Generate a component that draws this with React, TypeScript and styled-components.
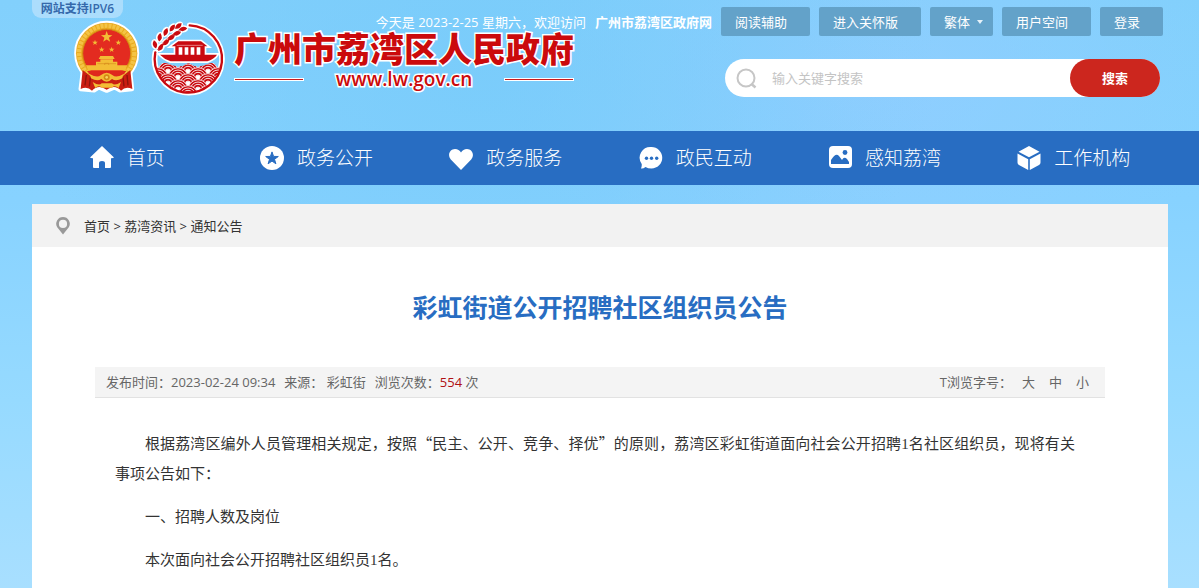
import React from "react";
import styled, { createGlobalStyle } from "styled-components";

const uiFont = `"Open Sans", "Noto Sans CJK SC", sans-serif`;
const cjkFont = `"Noto Sans CJK SC", sans-serif`;

const GlobalStyle = createGlobalStyle`
  *, *::before, *::after { box-sizing: border-box; }
  html { min-height: 100%; }
  body {
    margin: 0;
    min-height: 100vh;
    font: 13px/20px ${uiFont};
    color: #333;
    background:
      radial-gradient(ellipse at 40% 10%, rgba(120, 203, 250, 0.8), transparent 45%),
      radial-gradient(ellipse at 72% 14%, rgba(146, 205, 255, 0.8), transparent 30%),
      linear-gradient(#82d0fc 0, #87d2ff 200px, #96daff 400px, #a8dfff 588px);
  }
  a { color: inherit; text-decoration: none; }
  button, input, select { font: inherit; border: 0; margin: 0; }
`;

const Header = styled.header`
  display: grid;
  min-height: 131px;
  margin: 0 31px 0 32px;
  > * { grid-area: 1 / 1; }
`;

const Brand = styled.div`
  justify-self: start;
`;

const Badge = styled.div`
  width: 91px;
  height: 18px;
  border-radius: 0 0 9px 9px;
  background: rgba(190, 226, 252, 0.7);
  color: #3569ab;
  font-size: 12px;
  font-weight: 600;
  line-height: 18px;
  text-align: center;
`;

const BrandLink = styled.a`
  display: flex;
  gap: 8px;
  padding: 2px 0 0 40px;
`;

const Wordmark = styled.div`
  padding-top: 10px;
  color: #cb0a0c;
  paint-order: stroke fill;
  -webkit-text-stroke: 3px #fff;
`;

const SiteName = styled.div`
  font: 900 34px/36px ${cjkFont};
  white-space: nowrap;
`;

const SiteUrl = styled.div`
  display: flex;
  align-items: center;
  justify-content: space-between;
  font-size: 19px;
  font-weight: 600;
  line-height: 26px;
  &::before, &::after {
    content: "";
    width: 70px;
    height: 3px;
    border: 1px solid #fff;
    background: #cb1a1c;
  }
`;

const Tools = styled.div`
  justify-self: end;
  display: flex;
  flex-direction: column;
  align-items: flex-end;
  gap: 23px;
  padding-top: 7px;
`;

const TopBar = styled.div`
  display: flex;
  align-items: center;
  gap: 9px;
  margin-right: 5px;
  color: #fff;
  white-space: nowrap;
`;

const SiteLink = styled.strong`
  margin-left: 9px;
`;

const TopButton = styled.button`
  height: 29px;
  padding: 0 23px 0 14px;
  border-radius: 2px;
  background: #63a2c9;
  color: #fff;
  cursor: pointer;
`;

const LangBox = styled.label`
  display: flex;
  align-items: center;
  position: relative;
`;

const LangSelect = styled.select`
  appearance: none;
  height: 29px;
  width: 63px;
  padding: 0 23px 0 14px;
  border-radius: 2px;
  background: #63a2c9;
  color: #fff;
`;

const Caret = styled.svg`
  position: absolute;
  right: 10px;
  pointer-events: none;
`;

const SearchForm = styled.form`
  display: flex;
  align-items: center;
  width: 435px;
  height: 38px;
  margin-right: 8px;
  padding-left: 11px;
  border-radius: 19px;
  background: #fff;
`;

const SearchInput = styled.input`
  flex: 1;
  min-width: 0;
  padding: 0 14px;
  outline: 0;
  background: transparent;
  color: #333;
  &::placeholder { color: #c4c4c4; opacity: 1; }
`;

const SearchButton = styled.button`
  width: 90px;
  height: 38px;
  border-radius: 19px;
  background: #cc261e;
  color: #fff;
  font-weight: 700;
  cursor: pointer;
`;

const Nav = styled.nav`
  background: #286dc2;
`;

const NavList = styled.ul`
  display: grid;
  grid-template-columns: repeat(6, 1fr);
  margin: 0 31px 0 32px;
  padding: 0;
  list-style: none;
`;

const NavLink = styled.a`
  display: flex;
  align-items: center;
  justify-content: center;
  gap: 12px;
  height: 54px;
  color: #fff;
  font-size: 19px;
  font-weight: 300;
  white-space: nowrap;
`;

const Panel = styled.main`
  min-height: calc(100vh - 204px);
  margin: 19px 31px 0 32px;
  background: #fff;
`;

const Breadcrumb = styled.nav`
  display: flex;
  align-items: center;
  gap: 14px;
  height: 43px;
  padding-left: 24px;
  background: #f2f2f2;
`;

const Article = styled.article`
  padding: 40px 63px 24px;
`;

const Title = styled.h1`
  margin: 0 0 40px;
  color: #286dc2;
  font-size: 25px;
  font-weight: 700;
  line-height: 40px;
  text-align: center;
`;

const Meta = styled.div`
  display: flex;
  justify-content: space-between;
  height: 31px;
  padding: 0 16px 0 11px;
  border-bottom: 1px solid #e2e2e2;
  background: #f4f4f4;
  color: #666;
  line-height: 30px;
`;

const MetaGroup = styled.div<{ $gap: number }>`
  display: flex;
  align-items: center;
  gap: ${(p) => p.$gap}px;
`;

const Count = styled.span`
  color: #b01015;
`;

const SizeLabel = styled.span`
  margin-right: -4px;
`;

const SizeButton = styled.button`
  padding: 0;
  background: none;
  color: inherit;
  cursor: pointer;
`;

const Body = styled.div`
  padding: 30px 30px 0 20px;
  font: 15px/30px ${cjkFont};
`;

const Paragraph = styled.p`
  margin: 0 0 13px;
  text-indent: 2em;
  text-align: justify;
`;

const Numeral = styled.span`
  font-family: "Liberation Serif", serif;
  line-height: 1;
`;

const GOLD = "#f3bd35";
const RED = "#c90a10";

const starPath = (cx: number, cy: number, r: number) =>
  Array.from({ length: 10 }, (_, i) => {
    const radius = i % 2 ? r * 0.4 : r;
    const a = (Math.PI / 5) * i - Math.PI / 2;
    return `${i ? "L" : "M"}${(cx + radius * Math.cos(a)).toFixed(1)} ${(cy + radius * Math.sin(a)).toFixed(1)}`;
  }).join("") + "Z";

const Emblem = () => (
  <svg width="70" height="75" viewBox="6 15 210 225" aria-hidden="true">
    <g stroke="#fff" strokeWidth="13" strokeLinejoin="round" fill="#fff">
      <circle cx="110" cy="115" r="91" />
      <path d="M40 160L32 222L72 226L86 217L110 227L134 217L150 226L186 222L179 160Z" />
    </g>
    <circle cx="110" cy="115" r="92" fill="#e9a91f" />
    <circle cx="110" cy="115" r="83" fill="none" stroke="#f4c445" strokeWidth="13" strokeDasharray="9 3" />
    <path d="M38 165L32 222Q52 213 66 227Q85 207 110 224Q135 207 153 227Q167 213 187 222L181 165L150 190H70Z" fill="#ca1d12" />
    <path d="M49 180L45 211M61 187L58 214M171 180L174 211M159 187L162 214" stroke="#8e150c" strokeWidth="4" />
    <circle cx="110" cy="115" r="72" fill="#e32b20" stroke="#d38b12" strokeWidth="3" />
    <path d={starPath(110, 66, 18)} fill={GOLD} />
    {[[75, 83], [145, 83], [95, 104], [125, 104]].map(([x, y]) => (
      <path key={x} d={starPath(x, y, 9)} fill={GOLD} />
    ))}
    <path d="M86 132L91 123H129L134 132ZM91 133H129V140H91ZM78 140H142V151H78ZM48 151H172L166 166H54Z" fill={GOLD} />
    <path d="M82 146H138M104 150V145H116V150" stroke="#d88d1c" strokeWidth="2" fill="none" />
    <path d="M51 168H169Q157 187 134 188H86Q63 187 51 168Z" fill="#df281d" />
    <path d="M60 178Q82 190 92 181Q110 165 128 181Q138 190 160 178L157 190Q138 201 126 192Q110 208 94 192Q82 201 63 190Z" fill={GOLD} />
    <circle cx="110" cy="187" r="9" fill="#d48917" />
    <circle cx="110" cy="187" r="4" fill="#f8d45e" />
    <path d="M68 201Q88 214 95 205H126Q134 214 153 201L146 219Q134 209 126 218H95Q86 209 76 219Z" fill={GOLD} />
  </svg>
);

const waves: [number, number][] = [];
[170, 188, 206, 224, 242].forEach((y, row) => {
  for (let x = (row % 2 ? 204 : 234); x <= 480; x += 60) waves.push([x, y]);
});

const grains = [
  [255, 88, -14], [269, 67, 8], [287, 51, 22], [307, 39, 36], [325, 33, 50],
  [272, 97, 34], [288, 82, 48], [304, 68, 58], [321, 55, 70], [339, 42, 80],
];

const boatRing = "M359 31A101 101 0 1 1 256 112";

const BoatLogo = () => (
  <svg width="76" height="76" viewBox="240 15 228 228" aria-hidden="true">
    <clipPath id="waveArea">
      <path d="M255 144Q285 139 307 151Q332 160 355 144Q378 160 403 151Q425 139 458 144V240H255Z" />
    </clipPath>
    <clipPath id="ringArea">
      <circle cx="356" cy="131" r="100" />
    </clipPath>
    <path d={boatRing} fill="none" stroke="#fff" strokeWidth="17" strokeLinecap="round" />
    {grains.map(([x, y, a], i) => (
      <ellipse key={i} cx={x} cy={y} rx="11" ry="16" fill="#fff" transform={`rotate(${a} ${x} ${y})`} />
    ))}
    <g clipPath="url(#ringArea)">
      <g clipPath="url(#waveArea)">
        {waves.map(([x, y], i) => (
          <g key={i} fill="none" stroke="#f7dcdc" strokeWidth="3">
            <circle cx={x} cy={y} r="30" fill={RED} />
            <circle cx={x} cy={y} r="23" />
            <circle cx={x} cy={y} r="16" />
            <circle cx={x} cy={y} r="8" fill="#fff" />
          </g>
        ))}
      </g>
    </g>
    <path d={boatRing} fill="none" stroke={RED} strokeWidth="7" strokeLinecap="round" />
    <path d="M262 105Q284 68 338 40" fill="none" stroke={RED} strokeWidth="2" />
    {grains.map(([x, y, a], i) => (
      <path key={i} d={`M${x} ${y - 13}Q${x + 13} ${y} ${x} ${y + 13}Q${x - 13} ${y} ${x} ${y - 13}Z`} fill={RED} transform={`rotate(${a} ${x} ${y})`} />
    ))}
    <path d="M325 79H393L412 94H404V119H441Q435 130 412 139H302Q282 132 270 119H316V94H305Z" fill={RED} stroke="#fff" strokeWidth="10" paintOrder="stroke" />
    <path d="M326 97H337V119H326ZM344 97H355V119H344ZM362 97H373V119H362ZM380 97H391V119H380Z" fill="#fff" />
    <path d="M320 91H398" stroke="#f4b5b5" strokeWidth="2" />
  </svg>
);

const NavIcon = ({ children }: { children: React.ReactNode }) => (
  <svg width="26" height="26" viewBox="0 0 26 26" fill="#fff" aria-hidden="true">{children}</svg>
);

const navItems = [
  { label: "首页", icon: <path d="M13 1L25 12.5Q24 13.5 22 13.3V22Q22 23 21 23H16V18Q16 16 13 16Q10 16 10 18V23H5Q4 23 4 22V13.3Q2 13.5 1 12.5Z" /> },
  { label: "政务公开", icon: <><circle cx="13" cy="13" r="12" /><path d={starPath(13, 13.5, 6.6)} fill="#286dc2" stroke="#286dc2" strokeLinejoin="round" /></> },
  { label: "政务服务", icon: <path d="M13 25L2.8 14.5C-1 10 2 4 7 4Q11 4 13 7.5Q15 4 19 4C24 4 27 10 23.2 14.5Z" /> },
  { label: "政民互动", icon: <><path d="M13.5 2A10.5 10.5 0 0 1 13.5 23.5Q10 23.5 7.5 22Q5 24 3 23.5Q4 21 3.7 19A10.8 10.8 0 0 1 13.5 2Z" /><g fill="#286dc2"><circle cx="8.5" cy="13.2" r="1.7" /><circle cx="13.5" cy="13.2" r="1.7" /><circle cx="18.7" cy="13.2" r="1.7" /></g></> },
  { label: "感知荔湾", icon: <><rect x="2" y="1" width="23" height="22" rx="4" /><path d="M4 19V15Q9 7 12 11L15 15Q17 11 20 14L22 17V19Z" fill="#286dc2" /><circle cx="18" cy="7.5" r="2.4" fill="#286dc2" /></> },
  { label: "工作机构", icon: <path d="M13 1L23.5 6.7L13 12.3L2.5 6.7ZM1.5 8.5L12.2 14.2V25L3 20Q1.5 19 1.5 17.5ZM24.5 8.5L13.8 14.2V25L23 20Q24.5 19 24.5 17.5Z" /> },
];

export default function App() {
  return (
    <>
      <GlobalStyle />
      <Header>
        <Brand>
          <Badge>网站支持IPV6</Badge>
          <BrandLink href="#">
            <Emblem />
            <BoatLogo />
            <Wordmark>
              <SiteName>广州市荔湾区人民政府</SiteName>
              <SiteUrl>www.lw.gov.cn</SiteUrl>
            </Wordmark>
          </BrandLink>
        </Brand>
        <Tools>
          <TopBar>
            <span>
              今天是 2023-2-25 星期六，欢迎访问
              <SiteLink>广州市荔湾区政府网</SiteLink>
            </span>
            <TopButton type="button">阅读辅助</TopButton>
            <TopButton type="button">进入关怀版</TopButton>
            <LangBox>
              <LangSelect aria-label="语言" defaultValue="繁体">
                <option>繁体</option>
                <option>简体</option>
              </LangSelect>
              <Caret width="6" height="5" viewBox="0 0 6 5" aria-hidden="true">
                <path d="M0 1H6L3 5Z" fill="#e6f2fa" />
              </Caret>
            </LangBox>
            <TopButton type="button">用户空间</TopButton>
            <TopButton type="button">登录</TopButton>
          </TopBar>
          <SearchForm onSubmit={(e) => e.preventDefault()}>
            <svg width="22" height="22" viewBox="0 0 22 22" fill="none" stroke="#c6c6c6" strokeWidth="2" aria-hidden="true">
              <circle cx="10" cy="11" r="8.5" />
              <path d="M15.5 17L19.5 20.5" strokeWidth="2.5" />
            </svg>
            <SearchInput type="text" aria-label="输入关键字搜索" placeholder="输入关键字搜索" />
            <SearchButton type="submit">搜索</SearchButton>
          </SearchForm>
        </Tools>
      </Header>
      <Nav>
        <NavList>
          {navItems.map((item) => (
            <li key={item.label}>
              <NavLink href="#">
                <NavIcon>{item.icon}</NavIcon>
                {item.label}
              </NavLink>
            </li>
          ))}
        </NavList>
      </Nav>
      <Panel>
        <Breadcrumb>
          <svg width="14" height="18" viewBox="0 0 14 18" aria-hidden="true">
            <path fill="#999" fillRule="evenodd" d="M7 0A6.8 6.8 0 0 1 12.8 10.3L7 17.5L1.2 10.3A6.8 6.8 0 0 1 7 0ZM7 2.8A4.1 4.1 0 1 0 7 11A4.1 4.1 0 1 0 7 2.8Z" />
          </svg>
          <span>
            <a href="#">首页</a> &gt; <a href="#">荔湾资讯</a> &gt; <a href="#">通知公告</a>
          </span>
        </Breadcrumb>
        <Article>
          <Title>彩虹街道公开招聘社区组织员公告</Title>
          <Meta>
            <MetaGroup $gap={9}>
              <span>发布时间：2023-02-24 09:34</span>
              <span>来源： 彩虹街</span>
              <span>浏览次数：<Count>554</Count> 次</span>
            </MetaGroup>
            <MetaGroup $gap={14}>
              <SizeLabel>T浏览字号：</SizeLabel>
              <SizeButton type="button">大</SizeButton>
              <SizeButton type="button">中</SizeButton>
              <SizeButton type="button">小</SizeButton>
            </MetaGroup>
          </Meta>
          <Body>
            <Paragraph>
              根据荔湾区编外人员管理相关规定，按照“民主、公开、竞争、择优”的原则，荔湾区彩虹街道面向社会公开招聘<Numeral>1</Numeral>名社区组织员，现将有关事项公告如下：
            </Paragraph>
            <Paragraph>一、招聘人数及岗位</Paragraph>
            <Paragraph>本次面向社会公开招聘社区组织员<Numeral>1</Numeral>名。</Paragraph>
          </Body>
        </Article>
      </Panel>
    </>
  );
}
